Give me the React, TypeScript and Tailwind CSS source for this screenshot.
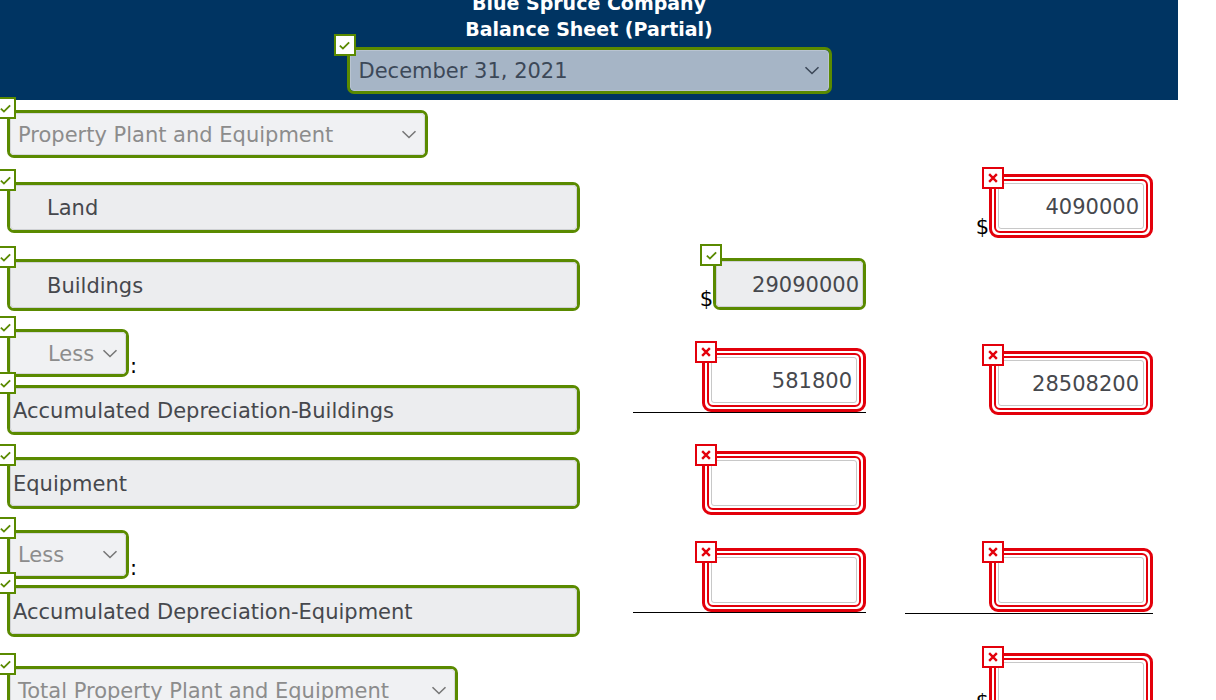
import React from "react";

// colours taken from the balance sheet widget
const GREEN = "#5a8a00";

function CheckBadge({ className = "" }: { className?: string }) {
  return (
    <span
      className={`absolute z-20 flex h-[22px] w-[22px] items-center justify-center border-2 border-[#5a8a00] bg-white ${className}`}
    >
      <svg viewBox="0 0 14 14" className="h-[13px] w-[13px]">
        <path d="M2 7.2l3.3 3.1L12 3.6" fill="none" stroke={GREEN} strokeWidth="2" />
      </svg>
    </span>
  );
}

function CrossBadge({ className = "" }: { className?: string }) {
  return (
    <span
      className={`absolute z-20 flex h-[22px] w-[22px] items-center justify-center border-2 border-[#e3000b] bg-white ${className}`}
    >
      <svg viewBox="0 0 14 14" className="h-[12px] w-[12px]">
        <path d="M2.5 2.5l9 9M11.5 2.5l-9 9" fill="none" stroke="#e3000b" strokeWidth="2.8" />
      </svg>
    </span>
  );
}

function Chevron({ color = "#777" }: { color?: string }) {
  return (
    <svg viewBox="0 0 16 9" className="h-[9px] w-[16px] shrink-0">
      <path d="M1.5 1.2l6.5 6.3 6.5-6.3" fill="none" stroke={color} strokeWidth="1.6" />
    </svg>
  );
}

interface BoxProps {
  label: string;
  className?: string;
  pl?: string;
}

function TextBox({ label, className = "", pl = "pl-[2px]" }: BoxProps) {
  return (
    <div className={`relative rounded-[7px] border-[3px] border-[#5a8a00] ${className}`}>
      <div
        className={`flex h-full items-center rounded-[4px] border border-[#cfd1d4] bg-[#ecedef] pt-[3px] text-[21px] text-[#46484d] ${pl}`}
      >
        {label}
      </div>
      <CheckBadge className="left-[-16px] top-[-16px]" />
    </div>
  );
}

function SelectBox({ label, className = "", pl = "pl-[7px]" }: BoxProps) {
  return (
    <div className={`relative rounded-[7px] border-[3px] border-[#5a8a00] ${className}`}>
      <div
        className={`flex h-full items-center justify-between rounded-[4px] border border-[#d6d8db] bg-[#f0f1f3] pr-[7px] text-[21px] text-[#8c8c8c] ${pl}`}
      >
        <span className="pt-[3px]">{label}</span>
        <Chevron />
      </div>
      <CheckBadge className="left-[-16px] top-[-16px]" />
    </div>
  );
}

function RedBox({ value = "" }: { value?: string }) {
  return (
    <div className="relative h-[64px] w-[164px] rounded-[9px] border-[3px] border-[#e3000b] bg-white p-[2px]">
      <div className="h-full rounded-[6px] border-2 border-[#e3000b] p-[2px]">
        <div className="flex h-full items-center justify-end rounded-[3px] border border-[#c8c8c8] bg-white pr-[4px] pt-[3px] text-[21px] text-[#46484d]">
          {value}
        </div>
      </div>
      <CrossBadge className="left-[-10px] top-[-10px]" />
    </div>
  );
}

function GreenValue({ value }: { value: string }) {
  return (
    <div className="relative h-[52px] w-[153px] rounded-[7px] border-[3px] border-[#5a8a00]">
      <div className="flex h-full items-center justify-end rounded-[4px] border border-[#cfd1d4] bg-[#ecedef] pr-[3px] pt-[3px] text-[21px] text-[#46484d]">
        {value}
      </div>
      <CheckBadge className="left-[-16px] top-[-17px]" />
    </div>
  );
}

function Dollar() {
  return <span className="text-[21px] leading-none text-black">$</span>;
}

export default function App() {
  return (
    <div className="min-h-[700px] w-[1216px] overflow-hidden bg-white font-['DejaVu_Sans',sans-serif]">
      {/* header */}
      <div className="relative z-10 flex h-[100px] w-[1178px] flex-col items-center bg-[#003462]">
        <div className="mt-[-10px] text-center text-[19px] font-bold leading-[26px] text-white">
          <div>Blue Spruce Company</div>
          <div>Balance Sheet (Partial)</div>
        </div>
        <div className="relative mt-[5px] h-[47px] w-[485px] rounded-[7px] border-[3px] border-[#5a8a00]">
          <div className="flex h-full items-center justify-between rounded-[4px] border border-[#b9c4d1] bg-[#a6b5c6] pl-[8px] pr-[8px] text-[21px] text-[#3c4858]">
            <span className="pt-[3px]">December 31, 2021</span>
            <Chevron color="#3c4858" />
          </div>
          <CheckBadge className="left-[-16px] top-[-16px]" />
        </div>
      </div>

      {/* section heading */}
      <div className="pl-[7px] pt-[10px]">
        <SelectBox label="Property Plant and Equipment" className="h-[48px] w-[421px]" />
      </div>

      {/* Land */}
      <div className="flex">
        <div className="w-[580px] pl-[7px] pt-[24px]">
          <TextBox label="Land" pl="pl-[36px]" className="h-[51px] w-[573px]" />
        </div>
        <div className="w-[325px]" />
        <div className="flex w-[248px] items-end justify-end pt-[16px]">
          <Dollar />
          <RedBox value="4090000" />
        </div>
      </div>

      {/* Buildings */}
      <div className="flex">
        <div className="w-[580px] pl-[7px] pt-[21px]">
          <TextBox label="Buildings" pl="pl-[36px]" className="h-[52px] w-[573px]" />
        </div>
        <div className="w-[325px]">
          <div className="ml-[53px] flex w-[233px] items-end justify-end pt-[20px]">
            <Dollar />
            <GreenValue value="29090000" />
          </div>
        </div>
      </div>

      {/* Less: accumulated depreciation - buildings */}
      <div className="flex">
        <div className="w-[580px] pl-[7px]">
          <div className="flex items-end pt-[18px]">
            <SelectBox label="Less" pl="pl-[37px]" className="h-[48px] w-[122px]" />
            <span className="ml-[1px] text-[21px] leading-none text-black">:</span>
          </div>
          <TextBox label="Accumulated Depreciation-Buildings" className="mt-[8px] h-[50px] w-[573px]" />
        </div>
        <div className="w-[325px]">
          <div className="ml-[53px] flex w-[233px] justify-end border-b border-black pt-[37px]">
            <RedBox value="581800" />
          </div>
        </div>
        <div className="flex w-[248px] justify-end pt-[40px]">
          <RedBox value="28508200" />
        </div>
      </div>

      {/* Equipment */}
      <div className="flex">
        <div className="w-[580px] pl-[7px] pt-[22px]">
          <TextBox label="Equipment" className="h-[52px] w-[573px]" />
        </div>
        <div className="w-[325px]">
          <div className="ml-[53px] flex w-[233px] justify-end pt-[16px]">
            <RedBox />
          </div>
        </div>
      </div>

      {/* Less: accumulated depreciation - equipment */}
      <div className="flex">
        <div className="w-[580px] pl-[7px]">
          <div className="flex items-end pt-[15px]">
            <SelectBox label="Less" className="h-[49px] w-[122px]" />
            <span className="ml-[1px] text-[21px] leading-none text-black">:</span>
          </div>
          <TextBox label="Accumulated Depreciation-Equipment" className="mt-[6px] h-[52px] w-[573px]" />
        </div>
        <div className="w-[325px]">
          <div className="ml-[53px] flex w-[233px] justify-end border-b border-black pt-[33px]">
            <RedBox />
          </div>
        </div>
        <div className="flex w-[248px] justify-end self-start border-b border-black pt-[33px] pb-[1px]">
          <RedBox />
        </div>
      </div>

      {/* Total */}
      <div className="flex">
        <div className="w-[580px] pl-[7px] pt-[29px]">
          <SelectBox label="Total Property Plant and Equipment" className="h-[48px] w-[451px]" />
        </div>
        <div className="w-[325px]" />
        <div className="flex w-[248px] items-end justify-end pt-[16px]">
          <span className="mb-[4px] text-[21px] leading-none text-black">$</span>
          <RedBox />
        </div>
      </div>
    </div>
  );
}
